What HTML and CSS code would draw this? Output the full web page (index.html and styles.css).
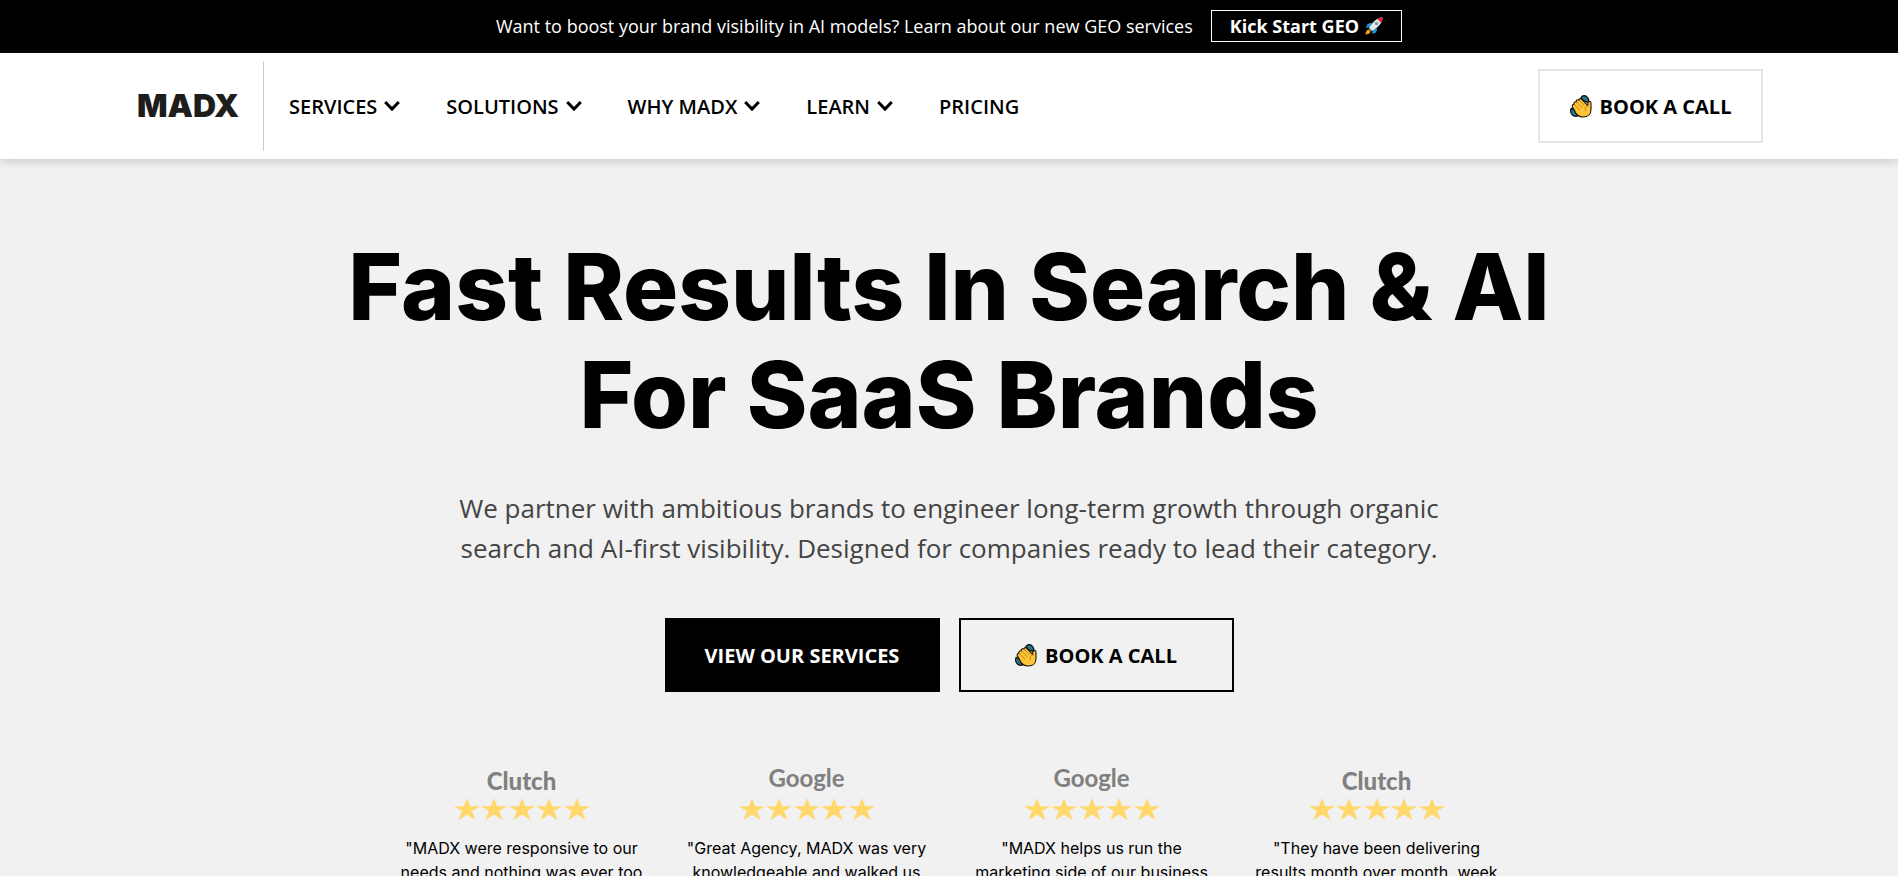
FILE: index.html
```html
<!DOCTYPE html>
<html lang="en">
<head>
<meta charset="utf-8" />
<meta name="viewport" content="width=device-width, initial-scale=1" />
<title>MADX</title>
<link rel="stylesheet" href="styles.css">
</head>

<body>
<svg width="0" height="0" class="sprite" aria-hidden="true">
	<symbol id="chevron" viewBox="0 0 16 12">
		<path d="M1.200 2l6.800 7L14.800 2" fill="none" stroke="#000" stroke-width="3"/>
	</symbol>
	<symbol id="wave" viewBox="0 0 22 23">
		<path d="M11 3C11.500 0.500 15 0 17 2c1.500 1.500 2 3.500 1.500 5.500L14 6z" fill="#2b7a8c" stroke="#0b1a20" stroke-width="1.400"/>
		<path d="M1.200 13.500C0 16 1 19 3 20.300c1.500 1 3.500 1.200 5 0.400L5 15z" fill="#2b7a8c" stroke="#0b1a20" stroke-width="1.400"/>
		<path d="M4.500 15.500c1.200 3.500 4.500 6.500 9 6.500 4.500 0 7.500-3 7.500-7.500V8c0-2-2.500-2.300-3-0.300l-0.300 2.800-6.200-6.300c-1.200-1.200-2.900-0.400-2.500 0.900C7.600 4.100 5.700 5.200 6.300 6.800 4.700 6.300 3.300 7.700 4 9.300c-1.600 0-2.300 1.500-1.500 2.800z" fill="#fdc536" stroke="#1d1608" stroke-width="1.100"/>
		<path d="M9 5.100l5.300 5.500M6.300 6.800l6 6.100M4 9.300l6 5.800M17.700 10.500c-2.200 1.200-3.200 3.200-2.200 5.500" fill="none" stroke="#b87a1c" stroke-width="0.800"/>
	</symbol>
</svg>

<div class="topbar">
	<p>Want to boost your brand visibility in AI models? Learn about our new GEO services</p>
	<a href="#" class="topbar-btn">Kick Start GEO
		<svg width="18" height="18" viewBox="0 0 18 18" aria-hidden="true">
			<path d="M7 5.500L2.500 7 1 11l4-1zM12.500 11L11 15.500 7 17l1-4z" fill="#1c9ad6"/>
			<path d="M17.500 0.500C13 0.500 9 3 4 11l3 3c8-5 10.500-9 10.500-13.500z" fill="#e6e9ec"/>
			<path d="M17.500 0.500c-2 0-3.800 0.400-5.300 1.400l3.900 3.900c1-1.500 1.400-3.300 1.400-5.300z" fill="#e0203a"/>
			<circle cx="11.500" cy="6.500" r="1.800" fill="#8b98a2"/>
			<path d="M4 11l3 3-1.500 0.700-2.200-2.200z" fill="#66727c"/>
			<path d="M3.300 12.500C1.500 13 0.500 15 0.500 17.500 3 17.500 5 16.500 5.500 14.700z" fill="#f79a1e"/>
		</svg>
	</a>
</div>

<header class="header">
	<div class="header-inner">
		<a href="#" class="logo">MADX</a>
		<nav class="nav">
			<a href="#">SERVICES <svg width="16" height="12"><use href="#chevron"/></svg></a>
			<a href="#">SOLUTIONS <svg width="16" height="12"><use href="#chevron"/></svg></a>
			<a href="#">WHY MADX <svg width="16" height="12"><use href="#chevron"/></svg></a>
			<a href="#">LEARN <svg width="16" height="12"><use href="#chevron"/></svg></a>
			<a href="#">PRICING</a>
		</nav>
		<a href="#" class="btn btn-light"><svg width="22" height="23"><use href="#wave"/></svg>BOOK A CALL</a>
	</div>
</header>

<main class="hero">
	<h1>Fast Results In Search &amp; AI<br>For SaaS Brands</h1>
	<p class="lead">We partner with ambitious brands to engineer long-term growth through organic<br>search and AI-first visibility. Designed for companies ready to lead their category.</p>
	<div class="actions">
		<a href="#" class="btn btn-dark">VIEW OUR SERVICES</a>
		<a href="#" class="btn btn-line"><svg width="22" height="23"><use href="#wave"/></svg>BOOK A CALL</a>
	</div>

	<div class="reviews">
		<div class="review">
			<div class="brand clutch">Clutch</div>
			<svg class="stars" viewBox="0 0 136 22"><path id="star" d="M13 0l3.200 8.200H26l-7.900 5 3.400 8.800-8.500-5.400L4.500 22l3.400-8.800L0 8.200h9.800z"/><use href="#star" x="27"/><use href="#star" x="55"/><use href="#star" x="82"/><use href="#star" x="110"/></svg>
			<p>"MADX were responsive to our<br>needs and nothing was ever too</p>
		</div>
		<div class="review">
			<div class="brand google">Google</div>
			<svg class="stars" viewBox="0 0 136 22"><use href="#star"/><use href="#star" x="27"/><use href="#star" x="55"/><use href="#star" x="82"/><use href="#star" x="110"/></svg>
			<p>"Great Agency, MADX was very<br>knowledgeable and walked us</p>
		</div>
		<div class="review">
			<div class="brand google">Google</div>
			<svg class="stars" viewBox="0 0 136 22"><use href="#star"/><use href="#star" x="27"/><use href="#star" x="55"/><use href="#star" x="82"/><use href="#star" x="110"/></svg>
			<p>"MADX helps us run the<br>marketing side of our business</p>
		</div>
		<div class="review">
			<div class="brand clutch">Clutch</div>
			<svg class="stars" viewBox="0 0 136 22"><use href="#star"/><use href="#star" x="27"/><use href="#star" x="55"/><use href="#star" x="82"/><use href="#star" x="110"/></svg>
			<p>"They have been delivering<br>results month over month, week</p>
		</div>
	</div>
</main>
</body>
</html>
```

FILE: styles.css
```css
*{box-sizing:border-box;}
html, body{margin:0; padding:0; height:100%;}
body{background:#f1f1f1; color:#000; font-family:"Open Sans", sans-serif; overflow:hidden;}
a{color:inherit; text-decoration:none;}
p, h1{margin:0;}
.sprite{position:absolute;}

.topbar{background:#000; color:#fff; height:53px; display:flex; justify-content:center; align-items:center; gap:18px; font-size:18px; padding-bottom:2px;}
.topbar-btn{border:1px solid #fff; height:32px; padding:0 18px; font-weight:700; display:flex; align-items:center; gap:6px;}

.header{position:relative; background:#fff; height:106px; box-shadow:0 1px 10px rgba(80,80,80,.3);}
.header-inner{max-width:1628px; height:100%; margin:0 auto; display:flex; align-items:center;}
.logo{width:129px; height:90px; line-height:90px; padding-left:2px; border-right:1px solid #ccc; font-family:Inter, sans-serif; font-weight:900; font-size:32px; color:#1d1d1b;}
.nav{display:flex; gap:46px; margin-left:25px; font-size:20px; font-weight:600;}
.nav a{display:flex; align-items:center; gap:7px;}

.btn{height:74px; display:flex; align-items:center; justify-content:center; gap:8px; font-size:20px; font-weight:700; border:2px solid #000;}
.btn-light{width:225px; margin-left:auto; border-color:#e5e5e5;}
.btn-dark{width:275px; background:#000; color:#fff;}
.btn-line{width:275px;}

.hero{text-align:center; padding-top:74px;}
.hero h1{font-family:Inter, sans-serif; font-size:92px; line-height:108px; font-weight:800;}
.lead{font-size:26px; line-height:40px; color:#444; margin-top:39px;}
.actions{display:flex; justify-content:center; gap:19px; margin-top:50px;}

.reviews{display:grid; grid-template-columns:repeat(4, 1fr); max-width:1140px; margin:72px auto 0;}
.brand{height:34px; color:#808080; font-family:Lato, sans-serif; font-size:24px; line-height:34px;}
.clutch{font-weight:900;}
.google{font-weight:700; line-height:28px;}
.stars{display:block; width:136px; height:22px; margin:0 auto 16px; fill:#ffd76a;}
.review p{font-family:Inter, sans-serif; font-size:16px; line-height:24px;}
```
